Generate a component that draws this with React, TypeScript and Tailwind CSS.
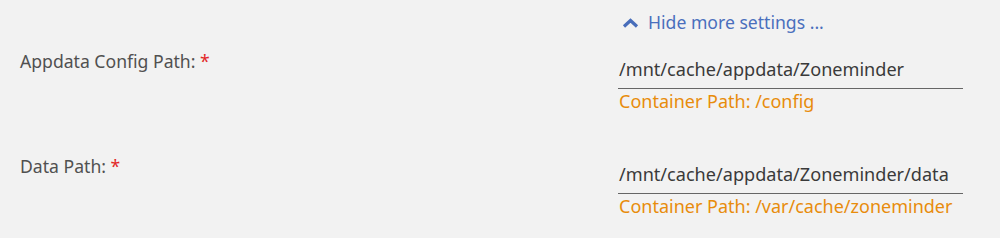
import React from 'react'

const font = { fontFamily: '"Noto Sans", "Open Sans", sans-serif' }

type Field = { label: string; value: string; target: string }

const fields: Field[] = [
  { label: 'Appdata Config Path:', value: '/mnt/cache/appdata/Zoneminder', target: '/config' },
  { label: 'Data Path:', value: '/mnt/cache/appdata/Zoneminder/data', target: '/var/cache/zoneminder' },
]

const ChevronUp = () => (
  <svg width="17" height="10" viewBox="0 0 17 10" className="mr-[9px] mt-[2px]">
    <path d="M2 8.5 L8.5 2.5 L15 8.5" fill="none" stroke="#486dba" strokeWidth="3.2" />
  </svg>
)

export default function App() {
  return (
    <div className="w-[1000px] h-[238px] bg-[#f2f2f2] text-[#505050]" style={font}>
      {/* toggle */}
      <div className="flex pt-[10px] pl-[622px]">
        <button className="flex items-center text-[17.6px] text-[#4a6fbd] leading-[24px]">
          <ChevronUp />
          Hide more settings ...
        </button>
      </div>

      {fields.map((f, i) => (
        <div key={f.label} className={`flex ${i === 0 ? 'mt-[15px]' : 'mt-[41px]'}`}>
          <div className="w-[618px] pl-5 text-[17.6px] leading-[24px]">
            {f.label} <span className="text-[#e22828]">*</span>
          </div>
          <div className="w-[345px] pt-[8px]">
            <div className="border-b border-[#666] text-[18.1px] leading-[24px] pb-[7px] text-[#3a3a3a] pl-[1px]">
              {f.value}
            </div>
            <div className="text-[18px] leading-[24px] text-[#e88c0c] pl-[1px]">
              Container Path: {f.target}
            </div>
          </div>
        </div>
      ))}
    </div>
  )
}
